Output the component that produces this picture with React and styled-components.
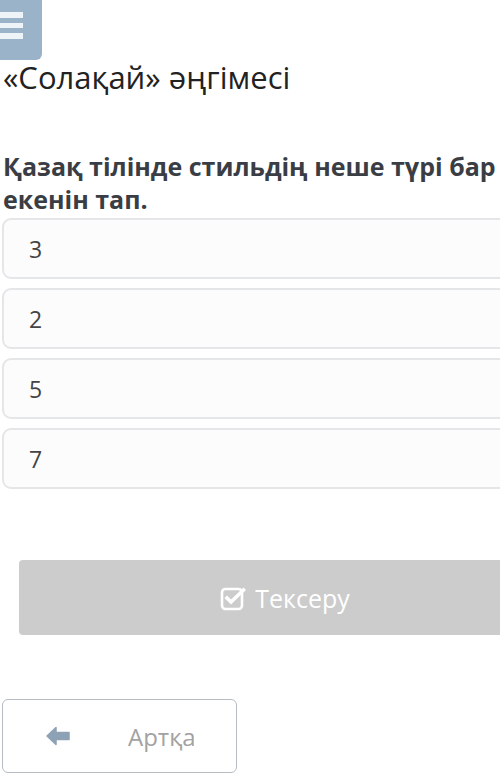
import React from "react";
import styled, { createGlobalStyle } from "styled-components";

const Global = createGlobalStyle`
  html, body { margin: 0; padding: 0; overflow: hidden; background: #fff; }
  body { font-family: "Open Sans", "Noto Sans", sans-serif; }
`;

const Page = styled.div`
  width: 500px;
  height: 777px;
  position: relative;
  overflow: hidden;
  display: flex;
  flex-direction: column;
`;

const MenuButton = styled.div`
  width: 42px;
  height: 60px;
  flex-shrink: 0;
  background: #9bb3c8;
  border-radius: 0 0 6px 0;
  display: flex;
  flex-direction: column;
  gap: 5px;
  padding-top: 12px;
  box-sizing: border-box;
`;

const MenuLine = styled.div`
  width: 23px;
  height: 5.5px;
  background: #eef3f7;
`;

const Title = styled.h1`
  margin: -1px 0 0 3px;
  font-size: 31px;
  font-weight: 400;
  line-height: 36px;
  color: #222;
  white-space: nowrap;
`;

const Question = styled.h2`
  margin: 55px 0 0 3px;
  font-size: 25px;
  font-weight: 700;
  line-height: 33px;
  color: #3a3e44;
  width: 497px;
`;

const Options = styled.div`
  margin: 2px 0 0 2px;
  display: flex;
  flex-direction: column;
  gap: 9px;
`;

const Option = styled.div`
  width: 540px;
  height: 61px;
  box-sizing: border-box;
  border: 2px solid #e4e6e8;
  border-radius: 9px;
  background: #fcfcfc;
  display: flex;
  align-items: center;
  padding-left: 25px;
  font-size: 23px;
  color: #444;
`;

const CheckButton = styled.div`
  margin: 71px 0 0 19px;
  width: 532px;
  height: 75px;
  flex-shrink: 0;
  background: #cccccc;
  border-radius: 4px;
  display: flex;
  align-items: center;
  justify-content: center;
  gap: 9px;
  color: #fff;
  font-size: 25px;
`;

const BackButton = styled.div`
  margin: 64px 0 0 2px;
  width: 235px;
  height: 74px;
  flex-shrink: 0;
  box-sizing: border-box;
  border: 1.5px solid #b5bcc4;
  border-radius: 6px;
  display: flex;
  align-items: center;
  padding-left: 42px;
  gap: 57px;
  color: #a2a2a2;
  font-size: 24px;
`;

const CheckIcon = () => (
  <svg width="26" height="26" viewBox="0 0 26 26" fill="none">
    <rect x="2" y="4" width="20" height="20" rx="3.5" stroke="#fff" strokeWidth="2.6" />
    <path d="M7 13 L11 17 L23.5 5" stroke="#fff" strokeWidth="3.6" strokeLinecap="square" />
  </svg>
);

const ArrowIcon = () => (
  <svg width="26" height="22" viewBox="0 0 26 22">
    <path d="M2 11 L11 2.5 L11 7.5 L24 7.5 L24 14.5 L11 14.5 L11 19.5 Z" fill="#8ea2b6" strokeLinejoin="round" stroke="#8ea2b6" strokeWidth="1.5" />
  </svg>
);

export default function App() {
  const options = ["3", "2", "5", "7"];
  return (
    <Page>
      <Global />
      <MenuButton>
        <MenuLine />
        <MenuLine />
        <MenuLine />
      </MenuButton>
      <Title>«Солақай» әңгімесі</Title>
      <Question>Қазақ тілінде стильдің неше түрі бар екенін тап.</Question>
      <Options>
        {options.map((o) => (
          <Option key={o}>{o}</Option>
        ))}
      </Options>
      <CheckButton>
        <CheckIcon />
        <span>Тексеру</span>
      </CheckButton>
      <BackButton>
        <ArrowIcon />
        <span>Артқа</span>
      </BackButton>
    </Page>
  );
}
